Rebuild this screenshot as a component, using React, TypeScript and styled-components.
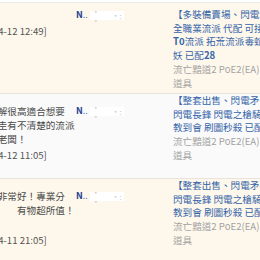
import React from "react";
import styled, { createGlobalStyle } from "styled-components";

const GlobalStyle = createGlobalStyle`
  html, body {
    margin: 0;
    padding: 0;
    background: #ffffff;
    overflow: hidden;
  }
  body {
    font-family: "Noto Sans CJK TC", "Liberation Sans", sans-serif;
    font-size: 9.6px;
  }
`;

const B = styled.b`
  font-weight: bold;
`;

type Review = {
  comment: string[];
  gapBeforeDate?: boolean;
  date: string;
  user: string;
  title: React.ReactNode[];
  game: string;
  kind: string;
};

const reviews: Review[] = [
  {
    comment: ["好評"],
    date: "[2025-04-12 12:49]",
    user: "N",
    title: [
      "【多裝備賣場、閃電矛、冰霜】",
      "全職業流派 代配 可接單",
      <>
        <B>T0</B>流派 拓荒流派毒蛇打
      </>,
      <>
        妖 已配<B>28</B>
      </>,
    ],
    game: "流亡黯道2 PoE2(EA)",
    kind: "道具",
  },
  {
    comment: ["老闆了解很高適合想要", "入坑時圭有不清楚的流派", "是個好老闆！"],
    date: "[2025-04-12 11:05]",
    user: "N",
    title: ["【整套出售、閃電矛不求人】", "閃電長鋒 閃電之槍騎士", "教到會 刷圖秒殺 已配好"],
    game: "流亡黯道2 PoE2(EA)",
    kind: "道具",
  },
  {
    comment: ["老闆人非常好！專業分", "享，\u3000\u3000\u3000有物超所值！"],
    gapBeforeDate: true,
    date: "[2025-04-11 21:05]",
    user: "N",
    title: ["【整套出售、閃電矛不求人】", "閃電長鋒 閃電之槍騎士", "教到會 刷圖秒殺 已配好"],
    game: "流亡黯道2 PoE2(EA)",
    kind: "道具",
  },
];

const Page = styled.div`
  width: 260px;
  height: 260px;
  overflow: hidden;
  background: #ffffff;
`;

const TopEdge = styled.div`
  height: 2px;
  border-bottom: 1px solid #e9e9e9;
  background: #ffffff;
`;

const Table = styled.div`
  margin-left: -31px;
  display: flex;
  flex-direction: column;
`;

const Row = styled.div<{ $odd: boolean; $height: number }>`
  display: grid;
  grid-template-columns: 106px 98px 1fr;
  height: ${(p) => p.$height}px;
  box-sizing: border-box;
  background: ${(p) => (p.$odd ? "#fef8ec" : "#fafafa")};
  border-bottom: 1px solid #e8e4dc;
`;

const CommentCell = styled.div<{ $top: number }>`
  padding-top: ${(p) => p.$top}px;
  color: #4a4a4a;
  line-height: 14px;
  overflow: hidden;
`;

const Line = styled.div`
  white-space: nowrap;
`;

const DateLine = styled.div`
  white-space: nowrap;
  margin-top: 2px;
  text-indent: -4px;
  color: #555555;
`;

const UserCell = styled.div<{ $top: number }>`
  padding-top: ${(p) => p.$top}px;
  padding-left: 1px;
  display: flex;
  align-items: flex-start;
  line-height: 14px;
`;

const UserName = styled.span`
  color: #22408f;
  font-size: 9px;
  font-weight: bold;
  white-space: nowrap;
`;

const Dots = styled.span`
  font-weight: normal;
  color: #6f7fae;
`;

const Mask = styled.span`
  display: inline-flex;
  justify-content: space-between;
  align-items: center;
  width: 34px;
  height: 9px;
  margin-top: 3px;
  margin-left: 2px;
  padding: 0 2px;
  box-sizing: border-box;
  background: #ffffff;
`;

const Speck = styled.span`
  color: #c4c8d4;
  font-size: 8px;
  line-height: 9px;
`;

const ProductCell = styled.div<{ $top: number }>`
  padding-top: ${(p) => p.$top}px;
  line-height: 13.7px;
  overflow: hidden;
`;

const TitleLine = styled.div`
  white-space: nowrap;
  color: #3463a8;
`;

const Meta = styled.div`
  white-space: nowrap;
  color: #a3a3a3;
`;

const App: React.FC = () => {
  return (
    <>
      <GlobalStyle />
      <Page>
        <TopEdge />
        <Table>
          {reviews.map((r, i) => (
            <Row key={i} $odd={i % 2 === 0} $height={i === 0 ? 91 : 85}>
              <CommentCell $top={i === 0 ? 5 : 10}>
                {r.comment.map((line, j) => (
                  <Line key={j}>{line}</Line>
                ))}
                {r.gapBeforeDate && <Line>&nbsp;</Line>}
                <DateLine>{r.date}</DateLine>
              </CommentCell>
              <UserCell $top={i === 0 ? 5 : 10}>
                <UserName>
                  {r.user}
                  <Dots>..</Dots>
                </UserName>
                <Mask>
                  <Speck>·　·</Speck>
                  <Speck>·:</Speck>
                </Mask>
              </UserCell>
              <ProductCell $top={i === 0 ? 5 : 0}>
                {r.title.map((line, j) => (
                  <TitleLine key={j}>{line}</TitleLine>
                ))}
                <Meta>{r.game}</Meta>
                <Meta>{r.kind}</Meta>
              </ProductCell>
            </Row>
          ))}
        </Table>
      </Page>
    </>
  );
};

export default App;
